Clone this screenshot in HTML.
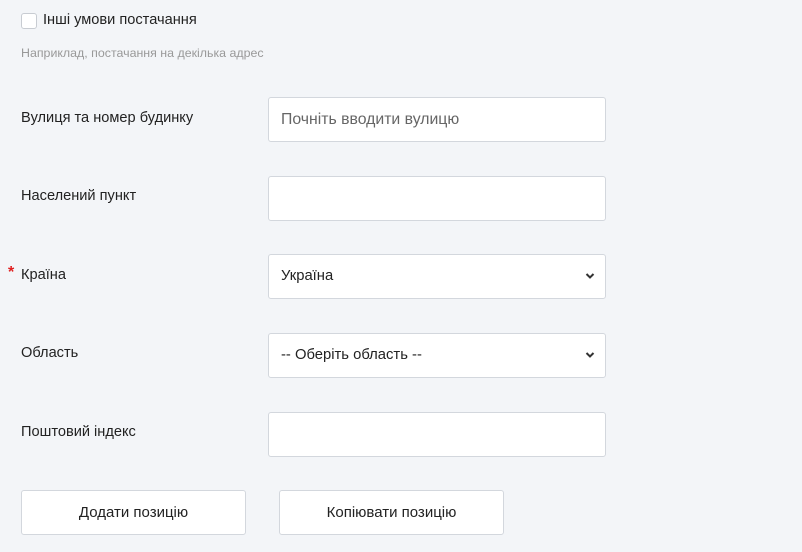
<!DOCTYPE html><html><head><style>
body{margin:0;width:802px;height:552px;background:#f3f5f8;font-family:"Liberation Sans",sans-serif;position:relative;overflow:hidden;color:#222}
.a{position:absolute}
.cb{left:21px;top:13px;width:14px;height:14px;border:1px solid #c8ccd2;border-radius:3px;background:#fff}
.lbl{left:21px;font-size:14.6px;color:#222}
.in{left:268px;height:43px;border:1px solid #d3d7dd;border-radius:3px;background:#fff;font-size:15.8px;line-height:43px;padding-left:12px;box-sizing:content-box;width:324px}
.sel{font-size:14.8px}
.chev{position:absolute;right:10px;top:17px}
.btn{top:490px;width:223px;height:43px;border:1px solid #d3d7dd;border-radius:3px;background:#fff;text-align:center;line-height:43px;font-size:15px;color:#222}
</style></head><body>
<div class="a cb"></div>
<div class="a" style="left:43px;top:12px;font-size:14.6px">Інші умови постачання</div>
<div class="a" style="left:21px;top:46px;font-size:12.4px;color:#999">Наприклад, постачання на декілька адрес</div>

<div class="a lbl" style="top:110px">Вулиця та номер будинку</div>
<div class="a in" style="top:97px;color:#666">Почніть вводити вулицю</div>

<div class="a lbl" style="top:188px">Населений пункт</div>
<div class="a in" style="top:176px"></div>

<div class="a" style="left:8px;top:264px;color:#e02020;font-size:16px;font-weight:bold">*</div>
<div class="a lbl" style="top:267px">Країна</div>
<div class="a in sel" style="top:254px;color:#222">Україна<svg class="chev" width="10" height="8" viewBox="0 0 10 8"><path d="M1.5 2 L5 5.5 L8.5 2" stroke="#333" stroke-width="2" fill="none"/></svg></div>

<div class="a lbl" style="top:345px">Область</div>
<div class="a in sel" style="top:333px;color:#222">-- Оберіть область --<svg class="chev" width="10" height="8" viewBox="0 0 10 8"><path d="M1.5 2 L5 5.5 L8.5 2" stroke="#333" stroke-width="2" fill="none"/></svg></div>

<div class="a lbl" style="top:424px">Поштовий індекс</div>
<div class="a in" style="top:412px"></div>

<div class="a btn" style="left:21px">Додати позицію</div>
<div class="a btn" style="left:279px">Копіювати позицію</div>
</body></html>
